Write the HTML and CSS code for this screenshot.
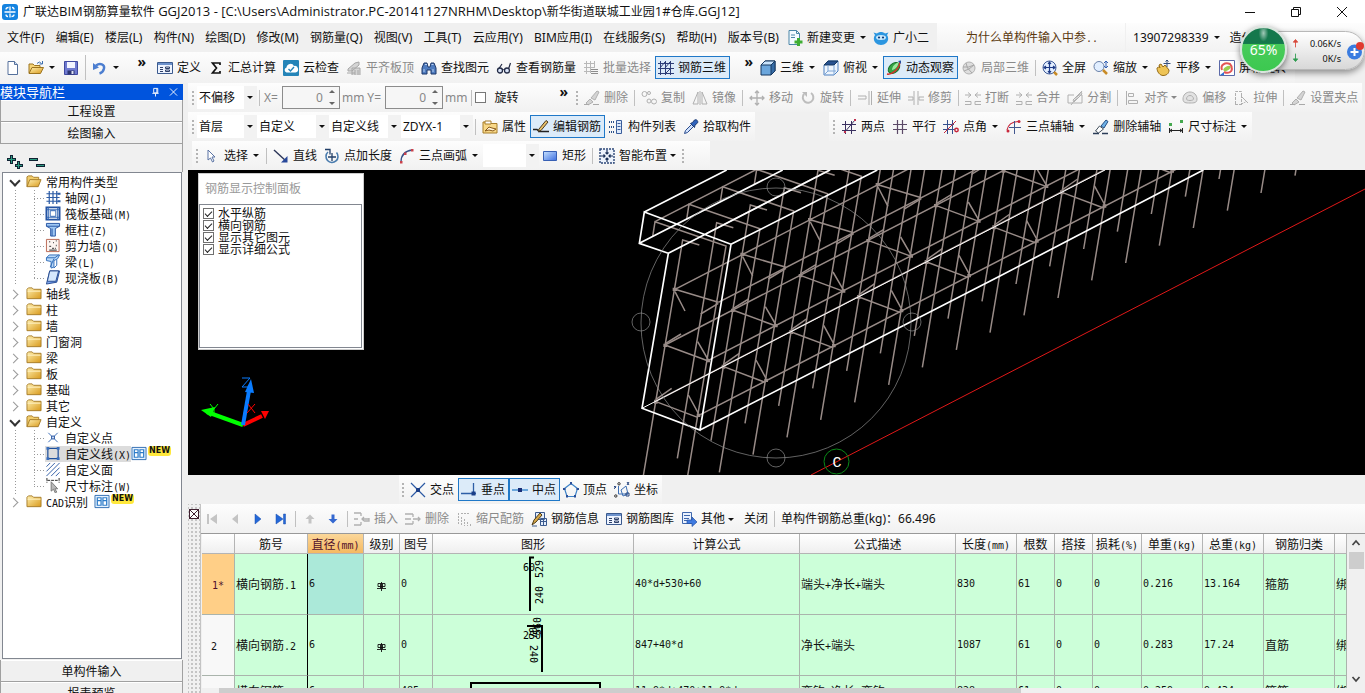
FILE: index.html
```html
<!DOCTYPE html>
<html lang="zh-CN">
<head>
<meta charset="utf-8">
<title>广联达BIM钢筋算量软件 GGJ2013</title>
<link rel="stylesheet" href="styles.css">
</head>
<body>
<svg class="sprite" aria-hidden="true">
  <defs>
    <linearGradient id="gFold" x1="0" y1="0" x2="1" y2="1"><stop offset="0" stop-color="#fff0b0"/><stop offset="1" stop-color="#d99a1c"/></linearGradient>
    <linearGradient id="gBlue" x1="0" y1="0" x2="1" y2="1"><stop offset="0" stop-color="#c8e2ff"/><stop offset="1" stop-color="#3d6fe0"/></linearGradient>
  </defs>
  <symbol id="i-logo" viewBox="0 0 16 16"><rect width="16" height="16" rx="3" fill="#1583e0"/><path d="M8 2.500v4M8 9.500v4M2.500 8h11M4 5.500q0-2 2.500-2M12 10.500q0 2-2.500 2M4 10.500q0 2 2 2M12 5.500q0-2-2-2" fill="none" stroke="#fff" stroke-width="1.300"/></symbol>
  <symbol id="i-new" viewBox="0 0 16 16"><path d="M3 1.500h6.500l3 3v10H3z" fill="#fff" stroke="#56719c"/><path d="M9.500 1.500v3h3" fill="#cfe0f5" stroke="#56719c"/></symbol>
  <symbol id="i-open" viewBox="0 0 16 16"><path d="M1 13V4h4l1.500 1.500H12V8" fill="#f6d477" stroke="#9c7420"/><path d="M1 13.500 4 7.500h11.500l-3 6z" fill="url(#gFold)" stroke="#9c7420"/><path d="M9 3.500q2.500-3 4.500 0M14.500 1v3h-3" fill="none" stroke="#3d6fae"/></symbol>
  <symbol id="i-save" viewBox="0 0 16 16"><path d="M1.500 1.500h13v13h-13z" fill="#6f7ad0" stroke="#4049a0"/><path d="M4 2h8v6H4z" fill="#f2f4ff"/><path d="M4.500 10.500h7v4h-7z" fill="#2c3570"/><path d="M8.500 11h2v3h-2z" fill="#dfe3f6"/></symbol>
  <symbol id="i-undo" viewBox="0 0 16 16"><path d="M4 5.500c4-3 9-1 8 3-.500 2.500-3 4.500-4.500 5" fill="none" stroke="#4c7ed0" stroke-width="2.400"/><path d="M1 3v7l6-2.500z" fill="#4c7ed0"/></symbol>
  <symbol id="i-form" viewBox="0 0 16 16"><path d="M.500 2.500h15v11H.500z" fill="#eef4ff" stroke="#3b5a8e"/><path d="M1 3h14v2H1z" fill="#6d92cc"/><path d="M3 7.500h3M3 9.500h3M3 11.500h3" stroke="#2e4068"/><path d="M8.500 7h4v1.500h-4zM8.500 10h4v1.500h-4z" fill="none" stroke="#2e4068"/></symbol>
  <symbol id="i-sigma" viewBox="0 0 16 16"><path d="M12 5V3H4.500l4 5-4 5H12v-2" fill="none" stroke="#111" stroke-width="1.700"/></symbol>
  <symbol id="i-cloud" viewBox="0 0 16 16"><rect width="16" height="16" rx="1" fill="#2484b8"/><path d="M3.500 12.500a2.600 2.600 0 0 1 0-5 4 4 0 0 1 7.500-1.500 3.300 3.300 0 0 1 1.500 6.500z" fill="#fff"/><path d="m5.500 9 2 2 3.500-4" fill="none" stroke="#2484b8" stroke-width="1.400"/></symbol>
  <symbol id="i-slab" viewBox="0 0 16 16"><path d="m2 9 7-6 4-1v3L6 11H2zM1 13h8M6 15V8h8v7" fill="#d5d5d5" stroke="#a6a6a6"/><path d="M9 10v5m3-5v5" stroke="#a6a6a6"/></symbol>
  <symbol id="i-find" viewBox="0 0 16 16"><path d="M1 14V8l2-5h3l1 4h2l1-4h3l2 5v6h-5v-4H6v4z" fill="#4f7cc0" stroke="#1d3668"/><path d="M3 9v3m9-3v3M4 4.500h2m4.500 0h2" stroke="#b9d0f0"/></symbol>
  <symbol id="i-glass" viewBox="0 0 16 16"><path d="M6 4 2 10M14.500 3l-2 6" stroke="#222a44" stroke-width="1.200"/><circle cx="4" cy="10.500" r="2.500" fill="#dbe6fa" stroke="#222a44" stroke-width="1.300"/><circle cx="11" cy="10.500" r="2.500" fill="#dbe6fa" stroke="#222a44" stroke-width="1.300"/><path d="M6.500 10q1-1 2 0" fill="none" stroke="#222a44"/></symbol>
  <symbol id="i-batch" viewBox="0 0 16 16"><path d="M1 3.500h11M1 7.500h11M1 11.500h7M3.500 1v13M7.500 1v12M11.500 1v7" stroke="#b8b8b8"/><path d="M8 9.500h7M8 11.500h7M8 13.500h7" stroke="#8d8d8d"/></symbol>
  <symbol id="i-grid3d" viewBox="0 0 16 16"><path d="M0 3.500h16M0 8.500h16M0 13.500h16M2.500 1v14M7.500 1v14M12.500 1v14M2 8l5-6M7 8l5-6M7 14l6-6" stroke="#2d3e78" fill="none"/></symbol>
  <symbol id="i-cube" viewBox="0 0 16 16"><path d="m1 5 4-4h10v10l-4 4H1z" fill="#6ba6dc" stroke="#163861"/><path d="m1 5 4-4h10l-4 4z" fill="#c8e3fb" stroke="#163861"/><path d="M11 5v10l4-4V1z" fill="#356ba5" stroke="#163861"/></symbol>
  <symbol id="i-top" viewBox="0 0 16 16"><path d="m1 5 4-4h10v10l-4 4H1z" fill="#eef5fd" stroke="#4b7fc0"/><path d="m1 5 4-4h10l-4 4z" fill="#27518f" stroke="#163861"/><path d="M11 5v10M5 5v6h8M5 11l-4 4" stroke="#7ea6d6" fill="none"/></symbol>
  <symbol id="i-orbit" viewBox="0 0 16 16"><ellipse cx="8" cy="8" rx="6.500" ry="4.500" transform="rotate(-40 8 8)" fill="#35a344" stroke="#16702a"/><path d="M6 9c1-4 4-6 7-7-1 3-2 7-7 8z" fill="#9ce89e"/><path d="M1 14c4 1 12-4 13-12" fill="none" stroke="#d4322c" stroke-width="1.500"/><path d="m12 1 3-.500V4z" fill="#2450a4"/></symbol>
  <symbol id="i-part" viewBox="0 0 16 16"><circle cx="8" cy="8" r="6" fill="#dedede" stroke="#b2b2b2"/><path d="M3 11q5-1 10-6M5 3q0 5 6 10M2 7q6 1 11-2" fill="none" stroke="#a7a7a7"/></symbol>
  <symbol id="i-full" viewBox="0 0 16 16"><circle cx="7.500" cy="7.500" r="6.500" fill="#e4efff" stroke="#3d5a98"/><path d="M7.500 2.500v10M2.500 7.500h10M6 4l1.500-2L9 4M6 11l1.500 2L9 11M4 6 2 7.500 4 9M11 6l2 1.500L11 9" fill="none" stroke="#1d3a86" stroke-width="1.200"/><path d="m12 12 3 3" stroke="#c88b26" stroke-width="2.500"/></symbol>
  <symbol id="i-zoom" viewBox="0 0 16 16"><circle cx="6" cy="6.500" r="5" fill="#e1eeff" stroke="#6980a8"/><path d="m10 10 4 4" stroke="#c88b26" stroke-width="2.500"/><path d="M13 1v6M11 3l2-2 2 2M11 6l2 2 2-2" fill="none" stroke="#305fb4"/></symbol>
  <symbol id="i-pan" viewBox="0 0 16 16"><path d="M1 8c2-2 3 0 3 0L3 5l2-1 2 3 2-2 4 5c0 4-3 5.500-6 5.500S1 12 1 8z" fill="#eec456" stroke="#946a17"/><path d="M11 0v7M7.500 3.500h7M9.500 1.500 11 0l1.500 1.500" fill="none" stroke="#34507e"/></symbol>
  <symbol id="i-rot" viewBox="0 0 16 16"><path d="M.500.500h15v15H.500z" fill="#fff" stroke="#5c6aa8"/><path d="M3 10C1 5 6 2 11 4l2 3M12 6c3 6-3 8-7 6" fill="none" stroke="#e45454" stroke-width="2"/><ellipse cx="8" cy="8.500" rx="4" ry="2" fill="#9ccc50" transform="rotate(-30 8 8.500)"/><path d="m1 15 4-3v3z" fill="#2b72d8"/></symbol>
  <symbol id="i-gbrush" viewBox="0 0 16 16"><path d="M7 8 13 1l2 1-4 8zM6 9l3 3-5 3-2-2z" fill="#d4d4d4" stroke="#b0b0b0"/><path d="M0 14.500h5M9 14.500h6" stroke="#a9a9a9"/></symbol>
  <symbol id="i-copy" viewBox="0 0 16 16"><circle cx="3.500" cy="4" r="2.500" fill="none" stroke="#b0b0b0"/><circle cx="8" cy="3" r="1.500" fill="none" stroke="#b0b0b0"/><circle cx="8" cy="11" r="2" fill="none" stroke="#b0b0b0"/><circle cx="13" cy="11.500" r="2.500" fill="none" stroke="#b0b0b0"/></symbol>
  <symbol id="i-mirror" viewBox="0 0 16 16"><path d="M6 2v12H1zM10 2v12h5zM8 1v14" fill="none" stroke="#b0b0b0"/></symbol>
  <symbol id="i-move" viewBox="0 0 16 16"><path d="M8 1v14M1 8h14M6 3l2-2 2 2M6 13l2 2 2-2M3 6 1 8l2 2M13 6l2 2-2 2" fill="none" stroke="#b0b0b0" stroke-width="1.300"/></symbol>
  <symbol id="i-turn" viewBox="0 0 16 16"><path d="M4 4a5.300 5.300 0 1 0 7-1" fill="none" stroke="#bdbdbd" stroke-width="2"/><path d="M2 2h5v5z" fill="#bdbdbd"/></symbol>
  <symbol id="i-extend" viewBox="0 0 16 16"><path d="M1 6h8v3H1M12 1v14M14.500 1v14" fill="none" stroke="#b0b0b0"/></symbol>
  <symbol id="i-trim" viewBox="0 0 16 16"><path d="M6 1v14M10 1v14M0 7h5v3H0M16 7h-5v3h5" fill="none" stroke="#b0b0b0"/></symbol>
  <symbol id="i-break" viewBox="0 0 16 16"><path d="M0 5h6M3 2.500 6 5 3 7.500M16 5h-6m3-2.500L10 5l3 2.500M0 11.500h6v3H0m16-3h-6v3h6" fill="none" stroke="#b0b0b0"/></symbol>
  <symbol id="i-split" viewBox="0 0 16 16"><path d="M1 5h6M1 5v8h14V5h-3M4 15 15 1M6 10l8-8 1 2-8 8z" fill="none" stroke="#b0b0b0"/></symbol>
  <symbol id="i-align" viewBox="0 0 16 16"><path d="M2.500 1v14M4.500 3.500h5v3h-5zM4.500 10.500h9v3h-9z" fill="none" stroke="#b0b0b0"/></symbol>
  <symbol id="i-offset" viewBox="0 0 16 16"><path d="M1 9c0-4 3-7 7-7s7 3 7 7-3 4-7 4-7 0-7-4zM4.500 9c0-2 1.500-3.500 3.500-3.500s3.500 1.500 3.500 3.500-7 2-7 0z" fill="#e2e2e2" stroke="#b0b0b0"/></symbol>
  <symbol id="i-stretch" viewBox="0 0 16 16"><path d="M2.500 14V1.500h6V5M2 14.500h7M8.500 5v9l4-2" fill="none" stroke="#b0b0b0" stroke-dasharray="3 1"/><path d="m8 6 7 7" stroke="#b0b0b0"/></symbol>
  <symbol id="i-prop" viewBox="0 0 16 16"><path d="M1 3h5l1 1.500h8V14H1z" fill="#f8d888" stroke="#a67c28"/><path d="M3 2h6v3H3z" fill="#fff" stroke="#a67c28"/><path d="m3 12 4-4 3 1 4 1-3 2-4-1z" fill="#fff4d8" stroke="#8a5a18"/></symbol>
  <symbol id="i-edit" viewBox="0 0 16 16"><path d="M0 10.500h4l2 2M5 12.500h11" fill="none" stroke="#222" stroke-width="1.400"/><path d="M6 10 13 1.500l2 1.500-7 8.500-3 .500z" fill="#e8c06a" stroke="#4a3a20"/></symbol>
  <symbol id="i-list" viewBox="0 0 16 16"><path d="M1 3h5M1 8h5M1 13h5" stroke="#28508c" stroke-width="2" stroke-dasharray="1 1"/><path d="M8.500 1.500h5v13h-5z" fill="#dce9fb" stroke="#3a5e9c"/><path d="M9.500 4.500h3M9.500 7.500h3M9.500 10.500h3" stroke="#3a5e9c"/></symbol>
  <symbol id="i-pick" viewBox="0 0 16 16"><path d="m1.500 14.500 1-3 6-6 2 2-6 6z" fill="#cfe0fb" stroke="#294b8e"/><path d="m7.500 4.500 2-1 2-2.500c2-1 4 1 3 3L12 6l-.500 2.500z" fill="#2e62bc" stroke="#1c3a72"/></symbol>
  <symbol id="i-two" viewBox="0 0 16 16"><path d="M1 5.500h14M1 11.500h14M4.500 2v13M10.500 2v13M3 14 14 1" stroke="#3a3060" fill="none"/><path d="M13 0h2v2h-2zM3 12h2v2H3z" fill="#c03050"/></symbol>
  <symbol id="i-para" viewBox="0 0 16 16"><path d="M1 5.500h14M1 10.500h14M5.500 1v14M10.500 1v14" stroke="#5c4a68" stroke-width="1.200"/></symbol>
  <symbol id="i-pang" viewBox="0 0 16 16"><path d="M0 5.500h11M0 10.500h12M4.500 1v14M9.500 1v14" stroke="#35508e"/><path d="m1 14 12-12" stroke="#c8283c"/><circle cx="13.500" cy="11" r="1.700" fill="none" stroke="#c8283c" stroke-width="1.500"/></symbol>
  <symbol id="i-3p" viewBox="0 0 16 16"><path d="M1 11C2 6 5 3 12 2.500" fill="none" stroke="#c8283c" stroke-width="1.200"/><path d="M8.500 2v13M3 8.500h12" stroke="#42578e"/><circle cx="13" cy="2.500" r="1.500" fill="#c8283c"/><circle cx="2" cy="12" r="1.500" fill="#c8283c"/></symbol>
  <symbol id="i-cbrush" viewBox="0 0 16 16"><path d="M8 7 13 1l2 1.500-4 6.500z" fill="#6fb2e8" stroke="#254e82"/><path d="m6.500 7 4 3-5 4-3-2z" fill="#fff" stroke="#44515e"/><path d="M0 14.500h15" stroke="#2b3d58" stroke-width="1.500" stroke-dasharray="6 3"/></symbol>
  <symbol id="i-dim" viewBox="0 0 16 16"><path d="M1.500 9v5M14.500 9v5M2 11.500h12M4 10l-2 1.500L4 13M12 10l2 1.500-2 1.500" fill="none" stroke="#222"/><path d="M1 4h3v3H1zM12 1h3v3h-3z" fill="#45a84e"/></symbol>
  <symbol id="i-cursor" viewBox="0 0 16 16"><path d="M4 2v10l2.500-2 2 4 1.500-1-2-4h3z" fill="#fff" stroke="#5a73a4"/></symbol>
  <symbol id="i-line" viewBox="0 0 16 16"><path d="m1 2 12 11" stroke="#2b3558" stroke-width="1.400"/><path d="M14.500 8v6.500H8z" fill="#28489a"/></symbol>
  <symbol id="i-plen" viewBox="0 0 16 16"><path d="M4 4a6 6 0 1 0 8.500.500" fill="none" stroke="#4a7cae" stroke-width="1.600"/><path d="M8 5v8M4 9h8M1 1.500h5v5" fill="none" stroke="#223f68" stroke-width="1.300"/></symbol>
  <symbol id="i-arc" viewBox="0 0 16 16"><path d="M2 14C2 7 6 3 13 2" fill="none" stroke="#394f86" stroke-width="1.300"/><path d="M1 13h2.500v2.500H1zM5 4.500h2.500V7H5zM12 1h2.500v2.500H12z" fill="#c9424c"/></symbol>
  <symbol id="i-rect" viewBox="0 0 16 16"><path d="M1.500 3.500h13v9h-13z" fill="url(#gBlue)" stroke="#3860b4"/></symbol>
  <symbol id="i-smart" viewBox="0 0 16 16"><path d="M1 1h14v14H1z" fill="#edf3fc" stroke="#2c4778" stroke-width="1.400" stroke-dasharray="2 1"/><path d="M8 2v4M8 10v4M2 8h4M10 8h4M6.500 4.500 8 6l1.500-1.500M6.500 11.500 8 10l1.500 1.500M4.500 6.500 6 8 4.500 9.500M11.500 6.500 10 8l1.500 1.500" fill="none" stroke="#1c3158" stroke-width="1.200"/></symbol>
  <symbol id="i-cross" viewBox="0 0 16 16"><path d="m1 1 14 14M15 1 1 15" stroke="#2c5aa4" stroke-width="1.200"/><path d="M6 6h4v4H6z" fill="#1b3f88"/></symbol>
  <symbol id="i-perp" viewBox="0 0 16 16"><path d="M0 11.500h15M12.500 1v11" stroke="#2d5ea6" stroke-width="1.300"/><path d="M10.500 9.500h4v4h-4z" fill="#1b3f88"/></symbol>
  <symbol id="i-mid" viewBox="0 0 16 16"><path d="M0 8h16" stroke="#3c8ad0" stroke-width="1.400"/><path d="M6 6h4v4H6z" fill="#1b2f78"/></symbol>
  <symbol id="i-pent" viewBox="0 0 16 16"><path d="m8 1.500 6.500 5-2.500 8H4l-2.500-8z" fill="none" stroke="#3c82c8" stroke-width="1.200"/><path d="M7 0h2v2.500H7zM0 6h2.500v2H0zM13.500 6H16v2h-2.500zM3 13h2v2.500H3zM11 13h2v2.500h-2z" fill="#2b4f98"/></symbol>
  <symbol id="i-coord" viewBox="0 0 16 16"><path d="M4.500 4v8h9M7 8l5-4 2 8-5 2z" fill="none" stroke="#3c6eb4"/><circle cx="5" cy="1.800" r="1.200" fill="none" stroke="#333"/><circle cx="1.800" cy="14" r="1.200" fill="none" stroke="#333"/><path d="m0 4 2 2m0-2L0 7M13 0l2 3m0-3-2 3M12 11h3v3h-3z" stroke="#26457e" fill="none"/></symbol>
  <symbol id="i-first" viewBox="0 0 16 16"><path d="M3 3h2v10H3zM13 3v10L6 8z" fill="#c4c4c4"/></symbol>
  <symbol id="i-prev" viewBox="0 0 16 16"><path d="M11 3v10L5 8z" fill="#c4c4c4"/></symbol>
  <symbol id="i-next" viewBox="0 0 16 16"><path d="M5 3v10l6-5z" fill="#2468d8" stroke="#1b4fae" stroke-width=".500"/></symbol>
  <symbol id="i-last" viewBox="0 0 16 16"><path d="M3 3v10l7-5zM10.500 3h2v10h-2z" fill="#2468d8" stroke="#1b4fae" stroke-width=".500"/></symbol>
  <symbol id="i-up" viewBox="0 0 16 16"><path d="M8 3.500 3.500 8h3v4.500h3V8h3z" fill="#c4c4c4"/></symbol>
  <symbol id="i-down" viewBox="0 0 16 16"><path d="M8 12.500 3.500 8h3V3.500h3V8h3z" fill="#3468d0"/></symbol>
  <symbol id="i-ins" viewBox="0 0 16 16"><path d="M0 2h7M0 8h4M0 14h7M7 2v3M7 14v-3M8 8h7M10 6 8 8l2 2M10 10h5V7" fill="none" stroke="#b0b0b0" stroke-width="1.300"/></symbol>
  <symbol id="i-del" viewBox="0 0 16 16"><path d="M0 3h8M0 8h6M0 13h8M8 3v3M8 10v3M8 8h7M13 6l2 2-2 2" fill="none" stroke="#b0b0b0" stroke-width="1.300"/></symbol>
  <symbol id="i-scale" viewBox="0 0 16 16"><path d="M2.500 2v12M5 2.500h9M5.500 6v9M8.500 8v7M11.500 11v4M14.500 13v2" stroke="#b0b0b0" stroke-dasharray="2 1"/></symbol>
  <symbol id="i-info" viewBox="0 0 16 16"><path d="M4.500 1.500h9v7h-9zM9.500 7.500h6v7h-6z" fill="#e4eefc" stroke="#3b5a8e"/><path d="m1 14 2-5 6-7 2 2-6 7z" fill="#d9a948" stroke="#4e3c18"/><path d="M9.500 10.500h6M12.500 7.500v7M1 15h5" stroke="#3b5a8e"/></symbol>
  <symbol id="i-other" viewBox="0 0 16 16"><path d="M1.500 1.500h9v11h-9z" fill="#eaf2ff" stroke="#3f67ac"/><path d="M3 4.500h6M3 7.500h5M3 9.500h4" stroke="#3f67ac"/><path d="M6 9h5V6l5 5-5 4.500V12.500H6z" fill="#3f7ae0" stroke="#2450a0" stroke-width=".700"/></symbol>
  <symbol id="i-change" viewBox="0 0 16 16"><path d="M2 .500h7.500l3 3v11H2z" fill="#f4fbff" stroke="#4b86a8"/><path d="M9.500.500v3h3M4 5h4M4 7.500h4" fill="none" stroke="#4b86a8"/><path d="M10 8h3v2.500h2.500v3H13V16h-3v-2.500H7.500v-3H10z" fill="#3fae33"/></symbol>
  <symbol id="i-mascot" viewBox="0 0 16 16"><path d="M2 5 .500 2.500 4 3.500c2-2 6-2 8 0l3.500-1L14 5c3 4 0 10-6 10S-1 9 2 5z" fill="#2c96e0"/><ellipse cx="8" cy="7.500" rx="5" ry="2.500" fill="#c9e8fb"/><circle cx="6" cy="7.500" r="1.100" fill="#123c78"/><circle cx="10" cy="7.500" r="1.100" fill="#123c78"/></symbol>
  <symbol id="i-folder" viewBox="0 0 16 16"><path d="M.500 13.500V3.500L2 2h4l1.500 1.500h8v10z" fill="url(#gFold)" stroke="#a67c28"/><path d="M1 5.500h14" stroke="#fff3c8"/></symbol>
  <symbol id="i-fopen" viewBox="0 0 16 16"><path d="M.500 13.500V3L2 2h4l1.500 1.500H13V6" fill="#f1cd6c" stroke="#a67c28"/><path d="m.500 13.500 3-7.500h12l-3 7.500z" fill="url(#gFold)" stroke="#a67c28"/></symbol>
  <symbol id="i-axis" viewBox="0 0 16 16"><path d="M1 4h14M1 8h14M1 12h14M4 1v14M8 1v14M12 1v14" stroke="#2d5ca6" stroke-width="1.300"/><path d="M13 3h3v2h-3zM13 11h3v2h-3z" fill="#2d5ca6"/></symbol>
  <symbol id="i-raft" viewBox="0 0 16 16"><path d="M1 1.500h14v13H1z" fill="#fff" stroke="#2453a2" stroke-width="2"/><path d="M5 5h6v6H5zM3 1v14M13 1v14M1 4h14M1 12h14" fill="none" stroke="#2d62b2"/></symbol>
  <symbol id="i-col" viewBox="0 0 16 16"><path d="M1 1.500h14v3L10.500 7v8h-5V7L1 4.500z" fill="#9fc8f4" stroke="#2453a2"/><path d="M1 4.500h14M7 7v8" stroke="#2453a2"/></symbol>
  <symbol id="i-wall" viewBox="0 0 16 16"><path d="M1 1.500h13.500v13H1z" fill="#fdf4f0" stroke="#b86450"/><path d="M4 4h1M8 5h1M11 3h1M4 9h2M7 11h2M11 8h1M4 13h8M10 11h1" stroke="#555" stroke-width="1.400"/></symbol>
  <symbol id="i-beam" viewBox="0 0 16 16"><path d="m1 4 3-3h11l-2 4-4 2v7l-3 1V8L1 7z" fill="#b9dafa" stroke="#2d6ab8"/><path d="M1 4h9l4-3M9 5l-4 9M12 6v6l-3 3" fill="none" stroke="#2d6ab8"/></symbol>
  <symbol id="i-plate" viewBox="0 0 16 16"><path d="M4.500 1H15l-3 12-11 2z" fill="url(#gBlue)" stroke="#274c90"/><path d="M4.500 1H14l-3 11H2z" fill="#d6e8fc" stroke="#274c90"/></symbol>
  <symbol id="i-dotx" viewBox="0 0 16 16"><path d="m3 3 10 10M13 3 3 13" stroke="#3468b4"/><path d="M6.500 6.500h3v3h-3z" fill="#dceaff" stroke="#1e4d9c"/></symbol>
  <symbol id="i-dline" viewBox="0 0 16 16"><path d="M2.500 2.500h11v11h-11z" fill="none" stroke="#1e4f9a" stroke-width="1.300"/><path d="M1 1h3v3H1zM12 1h3v3h-3zM1 12h3v3H1zM12 12h3v3h-3z" fill="#3b6fbc"/></symbol>
  <symbol id="i-hatch" viewBox="0 0 16 16"><path d="M1 5 5 1M1 10l9-9M1 15 15 1M6 15l9-9M11 15l4-4" stroke="#2c5aa4"/></symbol>
  <symbol id="i-dimc" viewBox="0 0 16 16"><path d="M1.500 0v5M14.500 0v5M2 2.500h12" stroke="#222" stroke-dasharray="3 1"/><path d="M6 4v10l2.500-2 2 4 1.500-1-2-3.500h3z" fill="#b8b8b8" stroke="#777"/></symbol>
  <symbol id="i-book" viewBox="0 0 16 16"><path d="M.500 1.500h15v13H.500z" fill="#e6f2ff" stroke="#2e6cb0"/><path d="M3 4h4v8H3zM9 4h4v8H9zM3 7h4m2 0h4" fill="#fff" stroke="#2e7cc8" stroke-width="1.300"/></symbol>
  <symbol id="i-rebar" viewBox="0 0 10 10"><path d="M4.500 1v9M0 7.500h9M1 5.500v-3M8 5.500v-3M1 2.500h7M1 5.500h7M3.500 3v4M5.500 3v4" fill="none" stroke="#111" stroke-width=".900"/></symbol>
  <symbol id="i-x" viewBox="0 0 10 10"><path d="m1 1 8 8M9 1 1 9" stroke="currentColor"/></symbol>
  <symbol id="i-pin" viewBox="0 0 10 10"><path d="M3 1h4.500v5H3zM6.500 1v5M1.500 6.500h7M5 7v3" fill="none" stroke="#fff"/></symbol>
</svg>

<div class="app">
  <header class="titlebar">
    <svg class="ic"><use href="#i-logo"/></svg>
    <h1>广联达<span class="lat">BIM</span>钢筋算量软件<span class="lat"> GGJ2013 - [C:\Users\Administrator.PC-20141127NRHM\Desktop\</span>新华街道联城工业园<span class="lat">1#</span>仓库<span class="lat">.GGJ12]</span></h1>
    <div class="winctl">
      <button aria-label="最小化"><svg viewBox="0 0 12 12"><path d="M1 6.500h10" stroke="#111"/></svg></button>
      <button aria-label="还原"><svg viewBox="0 0 12 12"><path d="M1.500 3.500h7v7h-7zM3.500 3V1.500h7v7H9" fill="none" stroke="#111"/></svg></button>
      <button aria-label="关闭窗口"><svg viewBox="0 0 12 12"><path d="m1 1 10 10M11 1 1 11" stroke="#111"/></svg></button>
    </div>
  </header>

  <div class="menubar">
    <nav class="menus">
      <button>文件(F)</button><button>编辑(E)</button><button>楼层(L)</button><button>构件(N)</button><button>绘图(D)</button><button>修改(M)</button><button>钢筋量(Q)</button><button>视图(V)</button><button>工具(T)</button><button>云应用(Y)</button><button>BIM应用(I)</button><button>在线服务(S)</button><button>帮助(H)</button><button>版本号(B)</button>
    </nav>
    <button class="tb dd"><svg class="ic"><use href="#i-change"/></svg>新建变更</button>
    <button class="tb"><svg class="ic"><use href="#i-mascot"/></svg>广小二</button>
    <a class="ask" href="#">为什么单构件输入中参<span class="n">..</span></a>
    <div class="account"><button class="tb dd">13907298339</button><button class="tb">造价豆</button></div>
  </div>

  <div class="toolrow mainrow">
    <div class="strip first">
      <button class="tb" aria-label="新建"><svg class="ic"><use href="#i-new"/></svg></button>
      <button class="tb dd" aria-label="打开"><svg class="ic"><use href="#i-open"/></svg></button>
      <button class="tb" aria-label="保存"><svg class="ic"><use href="#i-save"/></svg></button>
      <i class="sep"></i>
      <button class="tb dd" aria-label="撤销"><svg class="ic"><use href="#i-undo"/></svg></button>
      <span class="more">»</span>
    </div>
    <div class="strip">
      <button class="tb"><svg class="ic"><use href="#i-form"/></svg>定义</button>
      <button class="tb"><svg class="ic"><use href="#i-sigma"/></svg>汇总计算</button>
      <button class="tb"><svg class="ic"><use href="#i-cloud"/></svg>云检查</button>
      <button class="tb off"><svg class="ic"><use href="#i-slab"/></svg>平齐板顶</button>
      <button class="tb"><svg class="ic"><use href="#i-find"/></svg>查找图元</button>
      <button class="tb"><svg class="ic"><use href="#i-glass"/></svg>查看钢筋量</button>
      <button class="tb off"><svg class="ic"><use href="#i-batch"/></svg>批量选择</button>
      <button class="tb on"><svg class="ic"><use href="#i-grid3d"/></svg>钢筋三维</button>
      <span class="more">»</span>
    </div>
    <div class="strip">
      <button class="tb dd"><svg class="ic"><use href="#i-cube"/></svg>三维</button>
      <button class="tb dd"><svg class="ic"><use href="#i-top"/></svg>俯视</button>
      <button class="tb on"><svg class="ic"><use href="#i-orbit"/></svg>动态观察</button>
      <button class="tb off"><svg class="ic"><use href="#i-part"/></svg>局部三维</button>
      <i class="sep"></i>
      <button class="tb"><svg class="ic"><use href="#i-full"/></svg>全屏</button>
      <button class="tb dd"><svg class="ic"><use href="#i-zoom"/></svg>缩放</button>
      <button class="tb dd"><svg class="ic"><use href="#i-pan"/></svg>平移</button>
      <button class="tb"><svg class="ic"><use href="#i-rot"/></svg>屏幕旋转</button>
    </div>
  </div>

  <div class="body">
    <aside class="nav">
      <div class="navhead"><h2>模块导航栏</h2><button aria-label="固定"><svg><use href="#i-pin"/></svg></button><button aria-label="关闭面板"><svg><use href="#i-x"/></svg></button></div>
      <button class="navbtn">工程设置</button>
      <button class="navbtn">绘图输入</button>
      <div class="navtools">
        <button aria-label="全部展开"><svg viewBox="0 0 18 16"><path d="M5.500 1v9M1 5.500h9M12.500 7v8M9 11.500h8" stroke="#123" stroke-width="3"/><path d="M5.500 2v7M2 5.500h7M12.500 8v6M10 11.500h6" stroke="#2b9c80"/></svg></button>
        <button aria-label="全部折叠"><svg viewBox="0 0 18 16"><path d="M1 5.500h9M8 11.500h9" stroke="#123" stroke-width="3"/><path d="M2 5.500h7M9 11.500h7" stroke="#2b9c80"/></svg></button>
      </div>
      <ul class="tree">
        <li class="open"><span class="tog"></span><svg class="ic"><use href="#i-fopen"/></svg>常用构件类型
          <ul>
            <li><svg class="ic"><use href="#i-axis"/></svg>轴网<span class="n">(J)</span></li>
            <li><svg class="ic"><use href="#i-raft"/></svg>筏板基础<span class="n">(M)</span></li>
            <li><svg class="ic"><use href="#i-col"/></svg>框柱<span class="n">(Z)</span></li>
            <li><svg class="ic"><use href="#i-wall"/></svg>剪力墙<span class="n">(Q)</span></li>
            <li><svg class="ic"><use href="#i-beam"/></svg>梁<span class="n">(L)</span></li>
            <li><svg class="ic"><use href="#i-plate"/></svg>现浇板<span class="n">(B)</span></li>
          </ul>
        </li>
        <li><span class="tog"></span><svg class="ic"><use href="#i-folder"/></svg>轴线</li>
        <li><span class="tog"></span><svg class="ic"><use href="#i-folder"/></svg>柱</li>
        <li><span class="tog"></span><svg class="ic"><use href="#i-folder"/></svg>墙</li>
        <li><span class="tog"></span><svg class="ic"><use href="#i-folder"/></svg>门窗洞</li>
        <li><span class="tog"></span><svg class="ic"><use href="#i-folder"/></svg>梁</li>
        <li><span class="tog"></span><svg class="ic"><use href="#i-folder"/></svg>板</li>
        <li><span class="tog"></span><svg class="ic"><use href="#i-folder"/></svg>基础</li>
        <li><span class="tog"></span><svg class="ic"><use href="#i-folder"/></svg>其它</li>
        <li class="open"><span class="tog"></span><svg class="ic"><use href="#i-fopen"/></svg>自定义
          <ul>
            <li><svg class="ic"><use href="#i-dotx"/></svg>自定义点</li>
            <li><span class="sel"><svg class="ic"><use href="#i-dline"/></svg>自定义线<span class="n">(X)</span></span><svg class="ic book"><use href="#i-book"/></svg><b class="new">NEW</b></li>
            <li><svg class="ic"><use href="#i-hatch"/></svg>自定义面</li>
            <li><svg class="ic"><use href="#i-dimc"/></svg>尺寸标注<span class="n">(W)</span></li>
          </ul>
        </li>
        <li><span class="tog"></span><svg class="ic"><use href="#i-folder"/></svg><span class="n">CAD</span>识别<svg class="ic cadbook"><use href="#i-book"/></svg><b class="new">NEW</b></li>
      </ul>
      <button class="navbtn">单构件输入</button>
      <button class="navbtn last">报表预览</button>
    </aside>

    <main class="work">
      <div class="toolrow">
        <div class="strip grip offsetbar">
          <span class="combo w56"><select aria-label="偏移方式"><option>不偏移</option></select></span>
          <i class="sep"></i>
          <label class="num">X=<span class="spin"><input type="text" value="0" disabled></span>mm</label>
          <label class="num">Y=<span class="spin"><input type="text" value="0" disabled></span>mm</label>
          <i class="sep"></i>
          <label class="chk"><input type="checkbox">旋转</label>
          <span class="more">»</span>
        </div>
        <div class="strip grip">
          <button class="tb off"><svg class="ic"><use href="#i-gbrush"/></svg>删除</button><i class="sep"></i>
          <button class="tb off"><svg class="ic"><use href="#i-copy"/></svg>复制</button>
          <button class="tb off"><svg class="ic"><use href="#i-mirror"/></svg>镜像</button><i class="sep"></i>
          <button class="tb off"><svg class="ic"><use href="#i-move"/></svg>移动</button>
          <button class="tb off"><svg class="ic"><use href="#i-turn"/></svg>旋转</button><i class="sep"></i>
          <button class="tb off"><svg class="ic"><use href="#i-extend"/></svg>延伸</button>
          <button class="tb off"><svg class="ic"><use href="#i-trim"/></svg>修剪</button><i class="sep"></i>
          <button class="tb off"><svg class="ic"><use href="#i-break"/></svg>打断</button>
          <button class="tb off"><svg class="ic"><use href="#i-break"/></svg>合并</button>
          <button class="tb off"><svg class="ic"><use href="#i-split"/></svg>分割</button><i class="sep"></i>
          <button class="tb off dd tight"><svg class="ic"><use href="#i-align"/></svg>对齐</button>
          <button class="tb off"><svg class="ic"><use href="#i-offset"/></svg>偏移</button>
          <button class="tb off"><svg class="ic"><use href="#i-stretch"/></svg>拉伸</button><i class="sep"></i>
          <button class="tb off"><svg class="ic"><use href="#i-gbrush"/></svg>设置夹点</button>
        </div>
      </div>
      <div class="toolrow">
        <div class="strip grip memberbar">
          <span class="combo w60"><select aria-label="楼层"><option>首层</option></select></span>
          <span class="combo w72"><select aria-label="构件类别"><option>自定义</option></select></span>
          <span class="combo w72"><select aria-label="构件类型"><option>自定义线</option></select></span>
          <span class="combo w72"><select aria-label="构件名称"><option>ZDYX-1</option></select></span>
          <i class="sep"></i>
          <button class="tb"><svg class="ic"><use href="#i-prop"/></svg>属性</button>
          <button class="tb on"><svg class="ic"><use href="#i-edit"/></svg>编辑钢筋</button>
          <button class="tb"><svg class="ic"><use href="#i-list"/></svg>构件列表</button>
          <button class="tb"><svg class="ic"><use href="#i-pick"/></svg>拾取构件</button>
        </div>
        <div class="strip grip">
          <button class="tb"><svg class="ic"><use href="#i-two"/></svg>两点</button>
          <button class="tb"><svg class="ic"><use href="#i-para"/></svg>平行</button>
          <button class="tb dd"><svg class="ic"><use href="#i-pang"/></svg>点角</button>
          <button class="tb dd"><svg class="ic"><use href="#i-3p"/></svg>三点辅轴</button>
          <button class="tb"><svg class="ic"><use href="#i-cbrush"/></svg>删除辅轴</button>
          <button class="tb dd"><svg class="ic"><use href="#i-dim"/></svg>尺寸标注</button>
        </div>
      </div>
      <div class="toolrow drawrow">
        <div class="strip grip">
          <button class="tb dd"><svg class="ic"><use href="#i-cursor"/></svg>选择</button>
          <i class="sep"></i>
          <button class="tb"><svg class="ic"><use href="#i-line"/></svg>直线</button>
          <button class="tb"><svg class="ic"><use href="#i-plen"/></svg>点加长度</button>
          <button class="tb dd"><svg class="ic"><use href="#i-arc"/></svg>三点画弧</button>
          <span class="combo w56"><select aria-label="画弧方式"><option></option></select></span>
          <button class="tb"><svg class="ic"><use href="#i-rect"/></svg>矩形</button>
          <i class="sep"></i>
          <button class="tb dd tight"><svg class="ic"><use href="#i-smart"/></svg>智能布置</button>
        </div>
        <div class="strip grip stub"></div>
      </div>

      <section class="canvas" aria-label="钢筋三维视图">
        <svg class="scene" viewBox="188 170 1177 305" preserveAspectRatio="xMinYMin slice">
          <defs>
            <g id="bay"><path d="M158 215 165 170 378 243 256 974M298 240 248 225 130 932"/></g>
            <g id="cell">
              <path d="M225 373 355 412M195 540 325 588M168 710 293 757M225 380 255 438M302 447 355 415M293 530 325 585M265 690 295 745M197 535 243 507M168 703 215 670"/>
              <path d="M218 368h13v10h-13zM190 536h11v10h-11zM162 704h11v12h-11zM320 582h10v10h-10zM290 746h11v10h-11z" fill="#988b87" stroke="none"/>
            </g>
            <g id="bay5"><use href="#bay"/><use href="#bay" x="102" y="-52"/><use href="#bay" x="203" y="-105"/><use href="#bay" x="305" y="-157"/><use href="#bay" x="406" y="-209"/></g>
            <g id="cell3"><use href="#cell"/><use href="#cell" x="203" y="-105"/><use href="#cell" x="406" y="-209"/></g>
          </defs>
          <g transform="translate(600 165) scale(.33333)" fill="none" stroke="#988b87" stroke-width="4.500">
            <use href="#bay5"/><use href="#bay5" x="508" y="-262"/><use href="#bay5" x="1016" y="-523"/><use href="#bay5" x="1524" y="-785"/>
            <use href="#cell3"/><use href="#cell3" x="609" y="-314"/><use href="#cell3" x="1218" y="-628"/>
            <path d="M165 170 571-39M225 373l1827-942M355 412l1827-942M195 540l1827-942M325 586l1827-942M168 708l1827-942M295 752l1827-942M320 205l700-361"/>
            <g stroke="#fff" stroke-width="5">
              <path d="M133 141 393 238 300 795 126 730 205 265 118 235zM133 141 380 15M393 238 832 15M118 235 548 15M205 265 690 15M300 795 1200 333 1810 15"/>
              <path d="M126 730 1515 15" stroke-width="3"/>
            </g>
          </g>
          <g fill="none" stroke="#8c8c8c" stroke-width=".700"><circle cx="776" cy="323" r="135"/><circle cx="641" cy="322" r="9"/><circle cx="912" cy="322" r="9"/><circle cx="776" cy="458" r="9"/><circle cx="776" cy="187" r="9"/></g>
          <path d="M811 475 1365 189" stroke="#e01818"/>
          <circle cx="836.500" cy="461.500" r="12.500" fill="none" stroke="#0a8a18"/>
          <text x="837" y="467" fill="#fff" font-size="15" text-anchor="middle" class="mono">C</text>
          <g stroke-width="4"><path d="m243 425-36-13" stroke="#0f0"/><path d="m201 410 14-3-4 10z" fill="#0f0"/><path d="m243 425 19-9" stroke="#f00"/><path d="m269 411-8 0 4 8z" fill="#f00"/><path d="m243 425 7-40" stroke="#0a7cff"/><path d="m251 379-6 13 9 1z" fill="#0a7cff"/></g>
          <path d="M242 378h8l-8 9h9" fill="none" stroke="#0a7cff"/><path d="m210 404 4 5 4-5m-4 5v5" fill="none" stroke="#0f0"/><path d="m248 404 7 9m0-9-8 9" stroke="#f00"/>
        </svg>
        <form class="display">
          <h3>钢筋显示控制面板</h3>
          <div class="opts">
            <label><input type="checkbox" checked>水平纵筋</label>
            <label><input type="checkbox" checked>横向钢筋</label>
            <label><input type="checkbox" checked>显示其它图元</label>
            <label><input type="checkbox" checked>显示详细公式</label>
          </div>
        </form>
      </section>

      <div class="toolrow snaprow">
        <div class="strip grip">
          <button class="tb"><svg class="ic"><use href="#i-cross"/></svg>交点</button>
          <button class="tb on"><svg class="ic"><use href="#i-perp"/></svg>垂点</button>
          <button class="tb on"><svg class="ic"><use href="#i-mid"/></svg>中点</button>
          <button class="tb"><svg class="ic"><use href="#i-pent"/></svg>顶点</button>
          <button class="tb"><svg class="ic"><use href="#i-coord"/></svg>坐标</button>
        </div>
      </div>

      <section class="editor">
        <div class="handle"><button aria-label="关闭编辑"><svg><use href="#i-x"/></svg></button></div>
        <div class="pane">
          <div class="strip editbar">
            <button class="tb step" aria-label="首行"><svg class="ic"><use href="#i-first"/></svg></button>
            <button class="tb step" aria-label="上一行"><svg class="ic"><use href="#i-prev"/></svg></button>
            <button class="tb step" aria-label="下一行"><svg class="ic"><use href="#i-next"/></svg></button>
            <button class="tb step" aria-label="末行"><svg class="ic"><use href="#i-last"/></svg></button>
            <i class="sep"></i>
            <button class="tb step" aria-label="上移"><svg class="ic"><use href="#i-up"/></svg></button>
            <button class="tb step" aria-label="下移"><svg class="ic"><use href="#i-down"/></svg></button>
            <i class="sep"></i>
            <button class="tb off"><svg class="ic"><use href="#i-ins"/></svg>插入</button>
            <button class="tb off"><svg class="ic"><use href="#i-del"/></svg>删除</button>
            <button class="tb off"><svg class="ic"><use href="#i-scale"/></svg>缩尺配筋</button>
            <button class="tb"><svg class="ic"><use href="#i-info"/></svg>钢筋信息</button>
            <button class="tb"><svg class="ic"><use href="#i-form"/></svg>钢筋图库</button>
            <button class="tb dd tight"><svg class="ic"><use href="#i-other"/></svg>其他</button>
            <button class="tb close">关闭</button>
            <i class="sep"></i>
            <span class="total">单构件钢筋总重(kg)：66.496</span>
          </div>
          <div class="gridwrap">
            <div class="gridview">
              <table>
                <colgroup><col class="c33"><col class="c73"><col class="c56"><col class="c36"><col class="c33"><col class="c201"><col class="c166"><col class="c156"><col class="c61"><col class="c38"><col class="c38"><col class="c49"><col class="c61"><col class="c61"><col class="c71"><col></colgroup>
                <thead><tr><th></th><th>筋号</th><th class="hot">直径<span class="n">(mm)</span></th><th>级别</th><th>图号</th><th>图形</th><th>计算公式</th><th>公式描述</th><th>长度<span class="n">(mm)</span></th><th>根数</th><th>搭接</th><th>损耗<span class="n">(%)</span></th><th>单重<span class="n">(kg)</span></th><th>总重<span class="n">(kg)</span></th><th>钢筋归类</th><th></th></tr></thead>
                <tbody>
                  <tr><th class="cur"><span class="n">1*</span></th><td class="key">横向钢筋<span class="n">.1</span></td><td class="n pick">6</td><td class="mid"><svg class="rb"><use href="#i-rebar"/></svg></td><td class="n">0</td>
                    <td class="mid"><svg class="shape" viewBox="0 0 200 60"><path d="M101 3.500h-4V57" fill="none" stroke="#000" stroke-width="2"/><text x="90" y="17">60</text><text transform="translate(110 24) rotate(-90)">529</text><text transform="translate(110 50) rotate(-90)">240</text></svg></td>
                    <td class="n">40*d+530+60</td><td>端头<span class="n">+</span>净长<span class="n">+</span>端头</td><td class="n">830</td><td class="n">61</td><td class="n">0</td><td class="n">0</td><td class="n">0.216</td><td class="n">13.164</td><td>箍筋</td><td>绑扎</td></tr>
                  <tr><th><span class="n">2</span></th><td class="key">横向钢筋<span class="n">.2</span></td><td class="n">6</td><td class="mid"><svg class="rb"><use href="#i-rebar"/></svg></td><td class="n">0</td>
                    <td class="mid"><svg class="shape" viewBox="0 0 200 60"><path d="M94 11h15v46" fill="none" stroke="#000" stroke-width="2"/><text x="90" y="24">250</text><text transform="translate(108 20) rotate(-90)">560</text><text transform="translate(104 24) rotate(-90)">70</text><text transform="translate(97 30) rotate(90)">240</text></svg></td>
                    <td class="n">847+40*d</td><td>净长<span class="n">+</span>端头</td><td class="n">1087</td><td class="n">61</td><td class="n">0</td><td class="n">0</td><td class="n">0.283</td><td class="n">17.24</td><td>直筋</td><td>绑扎</td></tr>
                  <tr class="short"><th><span class="n">3</span></th><td class="key">横向钢筋<span class="n">.3</span></td><td class="n">6</td><td class="mid"><svg class="rb"><use href="#i-rebar"/></svg></td><td class="n">485</td>
                    <td class="mid"><svg class="shape" viewBox="0 0 200 30"><path d="M38 12V7h129v5" fill="none" stroke="#000" stroke-width="2"/></svg></td>
                    <td class="n">11.9*d+470+11.9*d</td><td>弯钩<span class="n">+</span>净长<span class="n">+</span>弯钩</td><td class="n">828</td><td class="n">61</td><td class="n">0</td><td class="n">0</td><td class="n">0.259</td><td class="n">9.434</td><td>箍筋</td><td>绑扎</td></tr>
                </tbody>
              </table>
            </div>
            <div class="vscroll"><svg viewBox="0 0 10 10"><path d="m1.500 7 3.500-4 3.500 4" fill="none" stroke="#444" stroke-width="1.700"/></svg><i></i><svg class="dn" viewBox="0 0 10 10"><path d="m1.500 3 3.500 4 3.500-4" fill="none" stroke="#444" stroke-width="1.700"/></svg></div>
          </div>
          <div class="hscroll"><i></i></div>
        </div>
      </section>
    </main>
  </div>

  <aside class="monitor">
    <div class="rates"><div><svg viewBox="0 0 8 10"><path d="M4 10V3M1.500 4 4 1l2.500 3z" fill="#d8483c" stroke="#d8483c"/></svg>0.06K/s</div><div><svg viewBox="0 0 8 10"><path d="M4 0v7M1.500 6 4 9l2.500-3z" fill="#2f9c50" stroke="#2f9c50"/></svg>0K/s</div></div>
    <button class="plus" aria-label="加速"><svg viewBox="0 0 18 18"><circle cx="8.500" cy="10" r="7.500" fill="#3a7ce0"/><path d="M8.500 6v8M4.500 10h8" stroke="#fff" stroke-width="2"/><circle cx="14" cy="4" r="4" fill="#e03a30"/></svg></button>
    <div class="ball">65%</div>
  </aside>
</div>
</body>
</html>
```
FILE: styles.css
```css
* { box-sizing: border-box; }
body {
  margin: 0;
  background: #f0f0f0;
  color: #111;
  font: 12px/16px "Noto Sans", "Noto Sans CJK SC", sans-serif;
  overflow: hidden;
}
button { border: 0; padding: 0; margin: 0; background: none; font: inherit; color: inherit; white-space: nowrap; }
h1, h2, h3 { margin: 0; font-size: 12px; font-weight: normal; }
.sprite { position: absolute; width: 0; height: 0; }
.ic { width: 16px; height: 16px; flex: none; }
.n { font-family: "DejaVu Sans Mono", monospace; font-size: 10px; line-height: 10px; }
.lat { font: 13px/13px "Open Sans", sans-serif; }
.mono { font-family: "Liberation Mono", monospace; }

.app { position: relative; display: flex; flex-direction: column; height: 100vh; }

/* title bar */
.titlebar { display: flex; align-items: center; flex: none; height: 23px; padding-left: 2px; gap: 5px; background: #fff; }
.titlebar h1 { flex: 1; white-space: nowrap; overflow: hidden; }
.winctl { display: flex; }
.winctl button { width: 46px; height: 22px; }
.winctl svg { width: 12px; height: 12px; vertical-align: middle; }

/* menu bar */
.menubar { display: flex; align-items: center; flex: none; height: 29px; white-space: nowrap; }
.menus { display: flex; justify-content: space-between; flex: 0 0 772px; margin: 0 8px 0 7px; }
.menubar > .tb { padding-left: 0; }
.menubar .dd { margin-right: 2px; }
.ask { flex: 0 0 188px; height: 29px; line-height: 29px; margin-left: 4px; padding-left: 29px; color: #5c3a10; text-decoration: none; background: linear-gradient(#fdfdfd, #f2f2f2); }
.account { display: flex; flex: 1; align-items: center; height: 29px; margin-left: 1px; padding-left: 4px; background: linear-gradient(#fdfdfd, #f2f2f2); overflow: hidden; }

/* toolbars */
.toolrow { display: flex; flex: none; height: 29px; overflow: hidden; }
.mainrow { height: 31px; }
.strip { display: flex; align-items: center; flex: none; background: linear-gradient(#fdfdfd, #f1f1f1); }
.grip::before { content: ""; align-self: center; width: 2px; height: 14px; margin: 0 3px 0 4px; background: repeating-linear-gradient(#b4b4b4 0 2px, transparent 2px 4px); }
.tb { display: flex; align-items: center; flex: none; gap: 4px; height: 23px; padding: 0 4px 0 3px; border-radius: 0; }
.tb.off { color: #8a8a8a; }
.tb.on { background: #dcebf9; box-shadow: inset 0 0 0 1px #1f78c8; }
.dd::after, .combo::after { content: ""; border: 3px solid transparent; border-top-color: #111; border-bottom: 0; }
.dd::after { margin: 0 1px; }
.dd.tight::after { margin: 0 -2px 0 -1px; }
.off.dd::after { border-top-color: #888; }
.sep { flex: none; width: 1px; height: 16px; margin: 0 3px 0 2px; background: #c0c0c0; }
.more { font-size: 14px; font-weight: bold; line-height: 14px; padding-bottom: 12px; color: #111; }
.mainrow .first { width: 154px; padding-left: 2px; }
.first .sep { height: 25px; }
.first .more { margin-left: auto; padding-right: 4px; }
.strip .more { margin-right: 4px; margin-left: auto; }
.mainrow .strip:nth-child(2) { width: 603px; }
.mainrow .strip:last-child { padding-right: 4px; }

.offsetbar { width: 384px; }
.memberbar { margin-right: 74px; }
.drawrow { padding-left: 4px; }
.stub { flex: 0 0 32px; }
.combo { display: flex; align-items: center; height: 23px; padding-right: 4px; background: linear-gradient(90deg, #fff calc(100% - 13px), #f2f2f2 0); }
.combo select { flex: 1; min-width: 0; height: 23px; margin: 0; padding: 0 0 0 2px; border: 0; background: none; font: inherit; color: inherit; appearance: none; }
.w56 { width: 56px; }
.w60 { width: 60px; }
.w72 { width: 72px; }
.offsetbar .combo { width: 60px; }
.num { display: flex; align-items: center; gap: 2px; color: #888; padding: 0 2px 0 1px; }
.spin { position: relative; width: 58px; height: 23px; margin-left: 2px; border: 1px solid #8c8c8c; background: #f6f6f6; }
.spin input { width: 40px; height: 21px; padding: 0; border: 0; background: none; text-align: right; font: inherit; color: #888; }
.spin::before, .spin::after { content: ""; position: absolute; right: 4px; border: 3px solid transparent; }
.spin::before { top: 3px; border-top: 0; border-bottom-color: #666; }
.spin::after { bottom: 3px; border-bottom: 0; border-top-color: #666; }
.chk { display: flex; align-items: center; gap: 8px; }
.chk input { appearance: none; width: 11px; height: 11px; margin: 0; border: 1px solid #777; background: #fff; }

/* module navigation */
.body { display: flex; flex: 1; min-height: 0; }
.nav { display: flex; flex-direction: column; flex: 0 0 183px; margin-right: 5px; padding-top: 1px; font-family: "Noto Sans CJK SC", sans-serif; overflow: hidden; }
.navhead { display: flex; align-items: center; flex: none; height: 16px; padding-right: 4px; background: #0054dd; color: #fff; gap: 8px; }
.navhead h2 { flex: 1; font-size: 13px; line-height: 16px; }
.navhead button { width: 10px; height: 16px; }
.navhead svg { display: block; width: 9px; height: 16px; }
.navbtn { flex: none; height: 22px; border: 1px solid #a0a0a0; border-width: 0 1px 1px; box-shadow: inset 0 1px #fff; }
.navbtn.last { margin-bottom: -11px; }
.navtools { display: flex; flex: none; gap: 4px; height: 28px; padding: 7px 0 0 6px; border-right: 1px solid #a0a0a0; }
.navtools svg { display: block; width: 18px; height: 16px; }
.tree { flex: 1; min-height: 0; margin: 0 1px 1px 2px; padding: 1px 0 0; list-style: none; border: 1px solid #828790; background: #fff; line-height: 16px; overflow: hidden; white-space: nowrap; }
.tree ul { margin: 0; padding: 0 0 0 31px; list-style: none; background: repeating-linear-gradient(#999 0 1px, transparent 1px 3px) 12px 0 / 1px 100% no-repeat, repeating-linear-gradient(#999 0 1px, transparent 1px 3px) 31px 0 / 1px calc(100% - 8px) no-repeat; }
.tree .ic { height: 15px; margin-right: 4px; vertical-align: top; }
.tree > li { padding-left: 6px; }
.tree > li > ul { margin-left: -6px; }
.tree ul > li { height: 16px; padding-left: 11px; background: repeating-linear-gradient(90deg, #999 0 1px, transparent 1px 3px) 0 8px / 10px 1px no-repeat; }
.tog { display: inline-block; width: 17px; height: 16px; vertical-align: top; }
.tog::before { content: ""; display: block; width: 6px; height: 6px; margin: 5px 0 0 1px; border: solid #999; border-width: 1px 1px 0 0; transform: rotate(45deg); }
.open > .tog::before { margin: 3px 0 0 2px; border-color: #333; border-width: 2px 2px 0 0; transform: rotate(135deg); }
.sel { display: inline-block; height: 16px; vertical-align: top; background: #dcdcdc; }
.tree .book, .tree .cadbook { margin-right: 1px; }
.tree .cadbook { margin-left: 6px; }
.new { display: inline-block; vertical-align: top; padding: 0 1px; font: bold 8px/10px "DejaVu Sans", sans-serif; background: #ffe83c; color: #111; border-radius: 3px; }

/* work area */
.work { display: flex; flex-direction: column; flex: 1; min-width: 0; }
.canvas { position: relative; flex: 1; min-height: 0; background: #000; overflow: hidden; }
.scene { display: block; width: 100%; height: 100%; }
.display { position: absolute; left: 10px; top: 3px; width: 166px; height: 177px; display: flex; flex-direction: column; padding: 1px 1px 1px 0; background: #fff; border: 1px solid #ccc; font-family: "Noto Sans CJK SC", sans-serif; }
.display h3 { height: 29px; padding-left: 6px; line-height: 26px; color: #999; }
.opts { flex: 1; padding: 2px 3px; border: 1px solid #828790; }
.opts label { display: flex; align-items: center; gap: 4px; height: 12px; line-height: 12px; }
.opts input { appearance: none; width: 11px; height: 11px; margin: 0; border: 1px solid #707070; background: #fff; }
.opts input:checked::before { content: ""; display: block; width: 6px; height: 3px; margin: 2px 0 0 1px; border: solid #222; border-width: 0 0 1px 1px; transform: rotate(-45deg); }
.snaprow { padding-left: 211px; }
.snaprow .grip::before { margin-left: 3px; }

/* bar editor */
.editor { display: flex; flex: none; height: 189px; }
.handle { flex: 0 0 13px; padding: 3px 0 0 1px; background: radial-gradient(circle, #c4c4c4 1px, transparent 1px) 2px 14px / 4px 4px; border-right: 1px solid #c4c4c4; }
.handle button { width: 10px; height: 10px; background: #fff; color: #402030; box-shadow: inset 0 0 0 1px #402030; }
.handle svg { display: block; width: 10px; height: 10px; }
.pane { display: flex; flex-direction: column; flex: 1; min-width: 0; }
.editbar { height: 29px; padding-top: 1px; }
.tb.step { width: 23px; justify-content: center; }
.editbar .close { padding: 0 4px 0 8px; }
.total { padding-left: 3px; }
.gridwrap { display: flex; flex: 1; min-height: 0; border-top: 1px solid #999; }
.gridview { flex: 1; min-width: 0; overflow: hidden; padding-left: 1px; }
.vscroll { display: flex; flex-direction: column; align-items: center; flex: 0 0 18px; }
.vscroll svg { width: 10px; height: 18px; }
.vscroll i { width: 15px; height: 17px; background: #cdcdcd; }
.vscroll .dn { margin-top: auto; }
.hscroll { flex: none; height: 5px; padding-left: 18px; }
.hscroll i { display: block; width: 70%; height: 5px; background: #cdcdcd; }

table { width: 100%; table-layout: fixed; border-spacing: 0; font-family: "Noto Sans CJK SC", sans-serif; }
th, td { overflow: hidden; padding: 0 0 0 1px; border: solid #aab4ac; border-width: 0 1px 1px 0; font-weight: normal; white-space: nowrap; text-align: left; }
thead th { height: 20px; padding: 0; text-align: center; background: linear-gradient(#fff, #efefef); border-color: #b4b4b4; }
thead .hot { background: linear-gradient(#fbd79a, #f5b961); color: #50102c; }
tbody tr { height: 61px; }
tbody .short { height: 31px; }
tbody th { text-align: center; padding: 0 8px 0 0; background: #f8f8f8; }
tbody .cur { padding: 0; background: #ffcf87; color: #50102c; }
td { background: #ccffd9; }
td.key { border-right-color: #000; }
td.pick { background: #abe9d9; }
td.mid { padding: 0; text-align: center; }
.rb { width: 10px; height: 10px; vertical-align: middle; }
.shape { display: block; width: 200px; height: 60px; }
.short .shape { height: 30px; }
.shape text { font: 10px "DejaVu Sans Mono", monospace; }
.c33 { width: 33px; }
.c36 { width: 36px; }
.c38 { width: 38px; }
.c49 { width: 49px; }
.c56 { width: 56px; }
.c61 { width: 61px; }
.c71 { width: 71px; }
.c73 { width: 73px; }
.c156 { width: 156px; }
.c166 { width: 166px; }
.c201 { width: 201px; }

/* floating speed monitor */
.monitor { position: absolute; top: 31px; right: 0; display: flex; align-items: center; width: 94px; height: 39px; padding-left: 20px; border-radius: 0 20px 20px 0; background: linear-gradient(#fff, #d8d8d8); border: 1px solid #b8b8b8; box-shadow: 0 3px 6px rgba(0, 0, 0, .4); }
.rates { flex: 1; font-size: 9px; line-height: 15px; }
.rates div { display: flex; align-items: center; justify-content: space-between; padding-right: 5px; }
.rates svg { width: 7px; height: 10px; }
.plus svg { display: block; width: 18px; height: 18px; }
.ball { position: absolute; left: -32px; top: -6px; width: 47px; height: 47px; border: 2px solid #d8e4dc; border-radius: 50%; background: radial-gradient(ellipse at 50% 12%, rgba(255, 255, 255, .6), transparent 16%), linear-gradient(#14784c 36%, #48cc5a 37%, #3cc850); color: #fff; font-size: 14px; line-height: 43px; text-align: center; box-shadow: 0 2px 6px rgba(0, 0, 0, .5); }
```
